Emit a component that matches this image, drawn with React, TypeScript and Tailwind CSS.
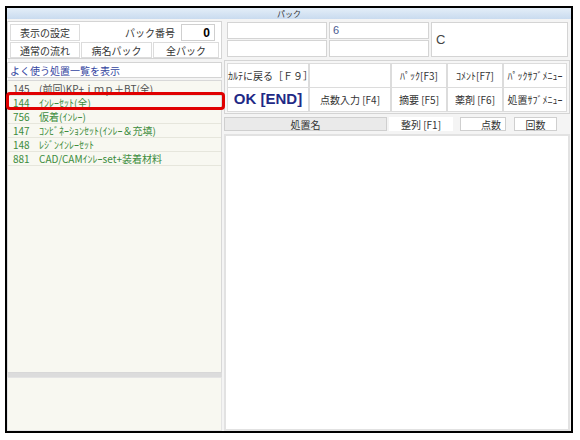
const jp = "font-['Noto_Sans_CJK_JP',sans-serif]";

type Item = { no: string; name: string; tone: string };

const items: Item[] = [
  { no: "145", name: "(前回)KP+ｉｍｐ＋BT(全)", tone: "text-[#505050]" },
  { no: "144", name: "ｲﾝﾚｰｾｯﾄ(全)", tone: "text-[#3c8c3c]" },
  { no: "756", name: "仮着(ｲﾝﾚｰ)", tone: "text-[#3c8c3c]" },
  { no: "147", name: "ｺﾝﾋﾞﾈｰｼｮﾝｾｯﾄ(ｲﾝﾚｰ＆充填)", tone: "text-[#3c8c3c]" },
  { no: "148", name: "ﾚｼﾞﾝｲﾝﾚｰｾｯﾄ", tone: "text-[#3c8c3c]" },
  { no: "881", name: "CAD/CAMｲﾝﾚｰset+装着材料", tone: "text-[#3c8c3c]" },
];

function Box({ children, className = "" }: { children?: React.ReactNode; className?: string }) {
  return (
    <div className={`flex items-center justify-center border border-[#dcdcdc] bg-white text-[10px] text-[#333] ${className}`}>
      {children}
    </div>
  );
}

export default function App() {
  return (
    <div className={`relative w-[580px] h-[440px] bg-white ${jp}`}>
      <div className="absolute left-[5px] top-[6px] w-[568px] h-[427px] border-2 border-black bg-[#f4f4f4] flex flex-col">
        {/* title bar */}
        <div className="h-[11px] bg-gradient-to-b from-[#e4eef8] to-[#c9dbef] flex items-center justify-center text-[8px] leading-none text-[#333]">
          パック
        </div>

        <div className="flex flex-1 gap-[2px] pt-[2px]">
          {/* left column */}
          <div className="w-[215px] flex flex-col">
            <div className="h-[38px] border border-[#d4d4d4] bg-white px-[2px] py-[2px] flex flex-col gap-[1px]">
              <div className="flex h-[17px] items-center">
                <Box className="w-[70px] h-[17px]">表示の設定</Box>
                <div className="flex-1 text-right pr-[6px] text-[10px] text-[#333]">パック番号</div>
                <div className="w-[34px] h-[17px] border border-[#cfcfcf] bg-white flex items-center justify-end pr-[4px] text-[12px] font-bold text-black font-['Liberation_Sans',sans-serif] mr-[4px]">
                  0
                </div>
              </div>
              <div className="flex h-[16px] gap-[1px]">
                <Box className="w-[70px] h-[16px]">通常の流れ</Box>
                <Box className="w-[71px] h-[16px]">病名パック</Box>
                <Box className="flex-1 h-[16px]">全パック</Box>
              </div>
            </div>

            <div className="mt-[3px] h-[16px] border border-[#d4d4d4] bg-white flex items-center pl-[2px] text-[10px] text-[#3344a0]">
              よく使う処置一覧を表示
            </div>

            <div className="mt-[2px] h-[293px] border border-[#d8d8d8] bg-[#f8f8f1] overflow-hidden pt-[1px]">
              {items.map((it) => (
                <div key={it.no} className={`h-[14px] flex items-center border-b border-[#e6e6dc] text-[10px] leading-none ${it.tone}`}>
                  <span className="w-[31px] pl-[5px]">{it.no}</span>
                  <span>{it.name}</span>
                </div>
              ))}
            </div>
            <div className="h-[4px] bg-[#dcdcdc]" />
            <div className="flex-1 border border-[#e4e4e4] bg-[#f8f8f1]" />
          </div>

          {/* right column */}
          <div className="flex-1 flex flex-col pr-[1px]">
            <div className="flex h-[37px] gap-[2px] pl-[3px] pt-[1px]">
              <div className="flex flex-col gap-[1px]">
                <div className="w-[100px] h-[17px] border border-[#d4d4d4] bg-white" />
                <div className="w-[100px] h-[17px] border border-[#d4d4d4] bg-white" />
              </div>
              <div className="flex flex-col gap-[1px]">
                <div className="w-[100px] h-[17px] border border-[#d4d4d4] bg-white flex items-center pl-[3px] text-[11px] text-[#4a5a90] font-['Liberation_Sans',sans-serif]">
                  6
                </div>
                <div className="w-[100px] h-[17px] border border-[#d4d4d4] bg-white" />
              </div>
              <div className="flex-1 h-[35px] border border-[#d4d4d4] bg-white flex items-center pl-[4px] text-[13px] text-[#444] font-['Liberation_Sans',sans-serif] mr-[2px]">
                C
              </div>
            </div>

            <div className="mt-[2px] h-[54px] border border-[#d4d4d4] bg-[#f6f6f6] p-[2px] grid grid-cols-[82px_82px_56px_56px_1fr] grid-rows-2">
              <Box className="h-[25px]">ｶﾙﾃに戻る［Ｆ９］</Box>
              <Box className="h-[25px]" />
              <Box className="h-[25px]">ﾊﾟｯｸ[F3]</Box>
              <Box className="h-[25px]">ｺﾒﾝﾄ[F7]</Box>
              <Box className="h-[25px] text-[9px]">ﾊﾟｯｸｻﾌﾞﾒﾆｭｰ</Box>
              <Box className="h-[25px]">
                <span className="text-[15px] font-bold text-[#1f2a86] font-['Liberation_Sans',sans-serif]">OK [END]</span>
              </Box>
              <Box className="h-[25px]">点数入力 [F4]</Box>
              <Box className="h-[25px]">摘要 [F5]</Box>
              <Box className="h-[25px]">薬剤 [F6]</Box>
              <Box className="h-[25px] text-[9px]">処置ｻﾌﾞﾒﾆｭｰ</Box>
            </div>

            <div className="mt-[3px] h-[14px] flex items-center text-[10px] text-[#333]">
              <div className="w-[163px] h-[14px] border border-[#cfcfcf] bg-[#eaeaea] flex items-center justify-center">処置名</div>
              <div className="w-[64px] h-[14px] ml-[2px] bg-white flex items-center justify-center">整列 [F1]</div>
              <div className="w-[46px] h-[14px] ml-[7px] border border-[#cfcfcf] bg-white flex items-center justify-end pr-[4px]">点数</div>
              <div className="w-[43px] h-[14px] ml-[8px] border border-[#cfcfcf] bg-white flex items-center justify-center">回数</div>
            </div>

            <div className="mt-[3px] flex-1 border-2 border-[#e2e2e2] bg-white" />
          </div>
        </div>
      </div>

      {/* highlight */}
      <div className="absolute left-[6px] top-[92px] w-[219px] h-[18px] border-[3px] border-[#e00000] rounded-[4px]" />
    </div>
  );
}
